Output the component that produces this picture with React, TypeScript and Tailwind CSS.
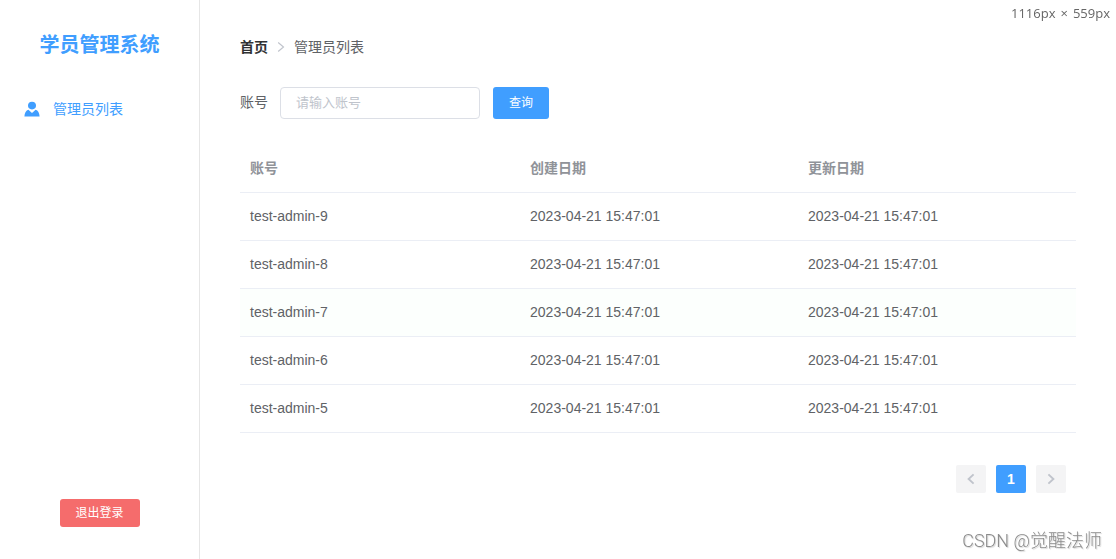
import React, { useState } from "react";

interface Admin {
  name: string;
  createdAt: string;
  updatedAt: string;
}

const admins: Admin[] = [9, 8, 7, 6, 5].map((n) => ({
  name: `test-admin-${n}`,
  createdAt: "2023-04-21 15:47:01",
  updatedAt: "2023-04-21 15:47:01",
}));

export default function App() {
  return (
    <div className="flex min-h-screen bg-white text-sm text-[#606266] font-['Liberation_Sans','Noto_Sans_CJK_SC',sans-serif]">
      <Sidebar />
      <main className="flex-1 min-w-0 px-10 pt-9">
        <Breadcrumb />
        <SearchForm />
        <AdminTable />
        <Pagination />
      </main>
      <div className="fixed top-0 right-0 flex gap-[5px] pr-[6px] pt-[3px] text-[13px] leading-5 text-[#666] font-['Open_Sans',sans-serif]">
        <span>1116px</span>
        <span>×</span>
        <span>559px</span>
      </div>
      <div className="fixed bottom-0 right-0 pr-[14px] pb-[6px] text-lg leading-6 font-light text-[#8c8c8c] [text-shadow:1px_1px_1px_#d4d4d4] font-['Roboto','Noto_Sans_CJK_SC',sans-serif]">
        CSDN @觉醒法师
      </div>
    </div>
  );
}

function Sidebar() {
  return (
    <aside className="w-[200px] shrink-0 flex flex-col border-r border-[#e6e6e6]">
      <h1 className="pt-[31px] text-center text-xl leading-7 font-bold text-[#409eff]">
        学员管理系统
      </h1>
      <nav className="mt-[22px]">
        <a
          href="#"
          className="flex items-center h-14 pl-6 gap-[13px] text-[#409eff]"
        >
          <UserIcon />
          管理员列表
        </a>
      </nav>
      <div className="mt-auto pb-8 flex justify-center">
        <button className="h-7 w-20 rounded-[3px] bg-[#f56c6c] text-xs text-white cursor-pointer">
          退出登录
        </button>
      </div>
    </aside>
  );
}

function Breadcrumb() {
  return (
    <nav className="flex items-center h-[22px] gap-2">
      <a href="#" className="font-bold text-[#303133]">
        首页
      </a>
      <Chevron className="w-[10px] h-3 text-[#c0c4cc]" />
      <span>管理员列表</span>
    </nav>
  );
}

function SearchForm() {
  const [account, setAccount] = useState("");
  return (
    <form
      className="mt-[29px] flex items-center"
      onSubmit={(e) => e.preventDefault()}
    >
      <label htmlFor="account" className="pr-3 pb-[2px]">
        账号
      </label>
      <input
        id="account"
        value={account}
        onChange={(e) => setAccount(e.target.value)}
        placeholder="请输入账号"
        className="w-[200px] h-8 px-[15px] pb-[2px] rounded border border-[#dcdfe6] text-[13px] placeholder:text-[#c0c4cc] outline-none focus:border-[#409eff]"
      />
      <button className="ml-[13px] w-14 h-8 rounded-[3px] bg-[#409eff] text-xs text-white cursor-pointer">
        查询
      </button>
    </form>
  );
}

function AdminTable() {
  return (
    <table className="mt-[25px] w-full table-fixed border-collapse text-left">
      <thead>
        <tr className="h-12 border-b border-[#ebeef5] text-[#909399]">
          <th className="w-[33.5%] px-[10px] font-bold">账号</th>
          <th className="px-[10px] font-bold">创建日期</th>
          <th className="px-[10px] font-bold">更新日期</th>
        </tr>
      </thead>
      <tbody>
        {admins.map((admin, index) => (
          <tr
            key={admin.name}
            className={`h-12 border-b border-[#ebeef5] ${index == 2 ? "bg-[#fcfffd]" : ""}`}
          >
            <td className="px-[10px]">{admin.name}</td>
            <td className="px-[10px]">{admin.createdAt}</td>
            <td className="px-[10px]">{admin.updatedAt}</td>
          </tr>
        ))}
      </tbody>
    </table>
  );
}

function Pagination() {
  return (
    <div className="mt-8 pr-[10px] flex justify-end gap-[10px] text-sm">
      <button
        disabled
        aria-label="上一页"
        className="w-[30px] h-7 rounded-xs bg-[#f4f4f5] text-[#c0c4cc] flex items-center justify-center"
      >
        <Chevron className="w-3 h-3 rotate-180" bold />
      </button>
      <button className="w-[30px] h-7 rounded-xs bg-[#409eff] text-white font-bold">
        1
      </button>
      <button
        disabled
        aria-label="下一页"
        className="w-[30px] h-7 rounded-xs bg-[#f4f4f5] text-[#c0c4cc] flex items-center justify-center"
      >
        <Chevron className="w-3 h-3" bold />
      </button>
    </div>
  );
}

function Chevron({ className, bold }: { className: string; bold?: boolean }) {
  return (
    <svg
      viewBox="0 0 12 12"
      fill="none"
      stroke="currentColor"
      strokeWidth={bold ? 1.9 : 1.4}
      className={className}
    >
      <path d={bold ? "M3.4 1.4 8.4 6 3.4 10.6" : "M2.6 0.6 9 6 2.6 11.4"} />
    </svg>
  );
}

function UserIcon() {
  return (
    <svg viewBox="0 0 16 16" fill="currentColor" className="w-4 h-4">
      <ellipse cx="8" cy="4.6" rx="4" ry="3.8" />
      <path d="M4.4 8.8 8 12 11.6 8.8C14 9.6 15.4 11.8 15.6 15.4H0.4C0.6 11.8 2 9.6 4.4 8.8Z" />
    </svg>
  );
}
